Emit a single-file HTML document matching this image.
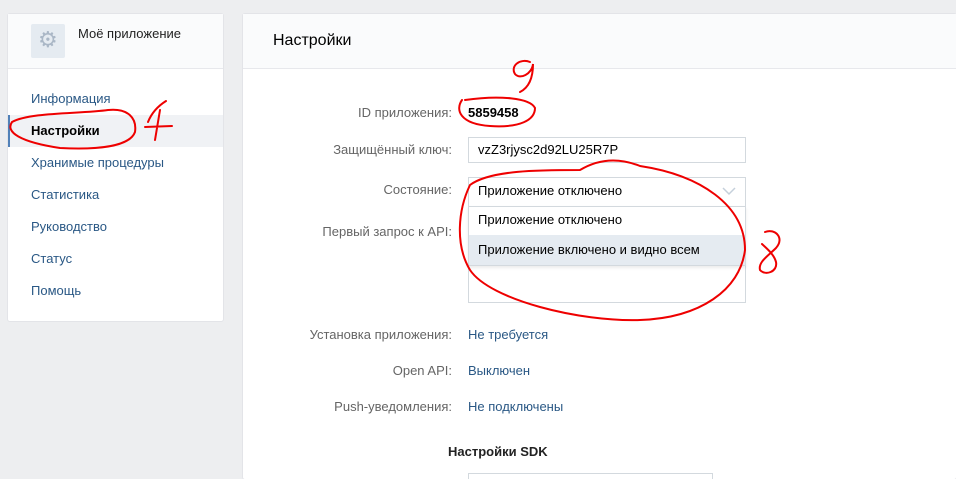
<!DOCTYPE html>
<html style="overflow:hidden;height:479px"><head><meta charset="utf-8"><style>
html,body{margin:0;width:956px;height:479px;overflow:hidden}
body{background:#edeef0;font-family:"Liberation Sans",sans-serif;font-size:13px;position:relative}
.a{position:absolute}
.card{background:#fff;border-radius:2px;box-shadow:0 0 0 1px #e3e4e8}
.lab{position:absolute;right:504px;color:#656565;text-align:right;white-space:nowrap}
.val{position:absolute;left:468px;color:#2a5885;white-space:nowrap}
.nav{position:absolute;left:31px;color:#2a5885}
.box{position:absolute;border:1px solid #d3d9de;background:#fff;box-sizing:border-box}
</style></head><body>
<div class="a card" style="left:8px;top:14px;width:215px;height:307px"></div>
<div class="a" style="left:8px;top:14px;width:215px;height:54px;background:#fafbfc;border-bottom:1px solid #e7e8ec"></div>
<div class="a" style="left:31px;top:24px;width:34px;height:34px;background:#e5ebf1;border-radius:2px"></div>
<div class="a" style="left:38px;top:29px;color:#aab7c6;font-size:22px;line-height:22px">⚙</div>
<div class="a" style="left:78px;top:26px;color:#222">Моё приложение</div>
<div class="nav" style="top:91px">Информация</div>
<div class="a" style="left:8px;top:115px;width:215px;height:32px;background:#f0f2f5;border-left:2px solid #5181b8;box-sizing:border-box"></div>
<div class="nav" style="top:123px;color:#000;font-weight:bold">Настройки</div>
<div class="nav" style="top:155px">Хранимые процедуры</div>
<div class="nav" style="top:187px">Статистика</div>
<div class="nav" style="top:219px">Руководство</div>
<div class="nav" style="top:251px">Статус</div>
<div class="nav" style="top:283px">Помощь</div>

<div class="a card" style="left:243px;top:14px;width:713px;height:465px"></div>
<div class="a" style="left:243px;top:14px;width:713px;height:54px;background:#fafbfc;border-bottom:1px solid #e7e8ec"></div>
<div class="a" style="left:273px;top:32px;font-size:16px;color:#000">Настройки</div>

<div class="lab" style="top:105px">ID приложения:</div>
<div class="val" style="top:105px;color:#000;font-weight:bold">5859458</div>
<div class="lab" style="top:142px">Защищённый ключ:</div>
<div class="box" style="left:468px;top:137px;width:278px;height:26px"></div>
<div class="a" style="left:478px;top:142px;color:#000">vzZ3rjysc2d92LU25R7P</div>
<div class="lab" style="top:182px">Состояние:</div>
<div class="lab" style="top:224px">Первый запрос к API:</div>
<div class="box" style="left:468px;top:206px;width:278px;height:97px"></div>
<div class="box" style="left:468px;top:177px;width:278px;height:30px"></div>
<div class="a" style="left:478px;top:183px;color:#000">Приложение отключено</div>
<svg class="a" style="left:722px;top:187px" width="14" height="9"><path d="M1 1l6 6 6-6" stroke="#c5d0db" fill="none" stroke-width="1.5"/></svg>
<div class="box" style="left:468px;top:206px;width:278px;height:60px;box-shadow:0 2px 3px rgba(0,0,0,.08)"></div>
<div class="a" style="left:478px;top:212px;color:#000">Приложение отключено</div>
<div class="a" style="left:469px;top:235px;width:276px;height:30px;background:#e5ebf1"></div>
<div class="a" style="left:478px;top:242px;color:#000">Приложение включено и видно всем</div>

<div class="lab" style="top:327px">Установка приложения:</div>
<div class="val" style="top:327px">Не требуется</div>
<div class="lab" style="top:363px">Open API:</div>
<div class="val" style="top:363px">Выключен</div>
<div class="lab" style="top:399px">Push-уведомления:</div>
<div class="val" style="top:399px">Не подключены</div>
<div class="a" style="left:448px;top:444px;font-weight:bold;color:#222">Настройки SDK</div>
<div class="box" style="left:468px;top:473px;width:245px;height:6px;border-bottom:none"></div>

<svg class="a" style="left:0;top:0" width="956" height="479" fill="none" stroke="#e00" stroke-width="2" stroke-linecap="round">
<path d="M108 110C80 114 30 112 12 122C5 132 20 142 60 148C100 150 130 146 135 132C137 118 128 108 108 110"/>
<path d="M148 122C152 112 158 106 166 101M160 110L155 140M145 127L172 126"/>
<path d="M462 100C455 110 460 124 490 126C520 128 535 120 535 108C530 98 500 95 465 100"/>
<path d="M530 62C520 58 510 66 515 74C520 80 532 74 533 64C533 80 528 88 520 92"/>
<path d="M580 170C600 158 620 158 640 166C700 175 745 205 745 250C740 290 700 318 640 320C580 322 490 300 470 270C455 245 458 210 470 185C490 170 540 170 580 170"/>
<path d="M765 232C775 228 785 238 776 248C768 256 758 262 760 270C765 276 778 272 776 262C774 254 766 248 762 244"/>
</svg>
</body></html>
